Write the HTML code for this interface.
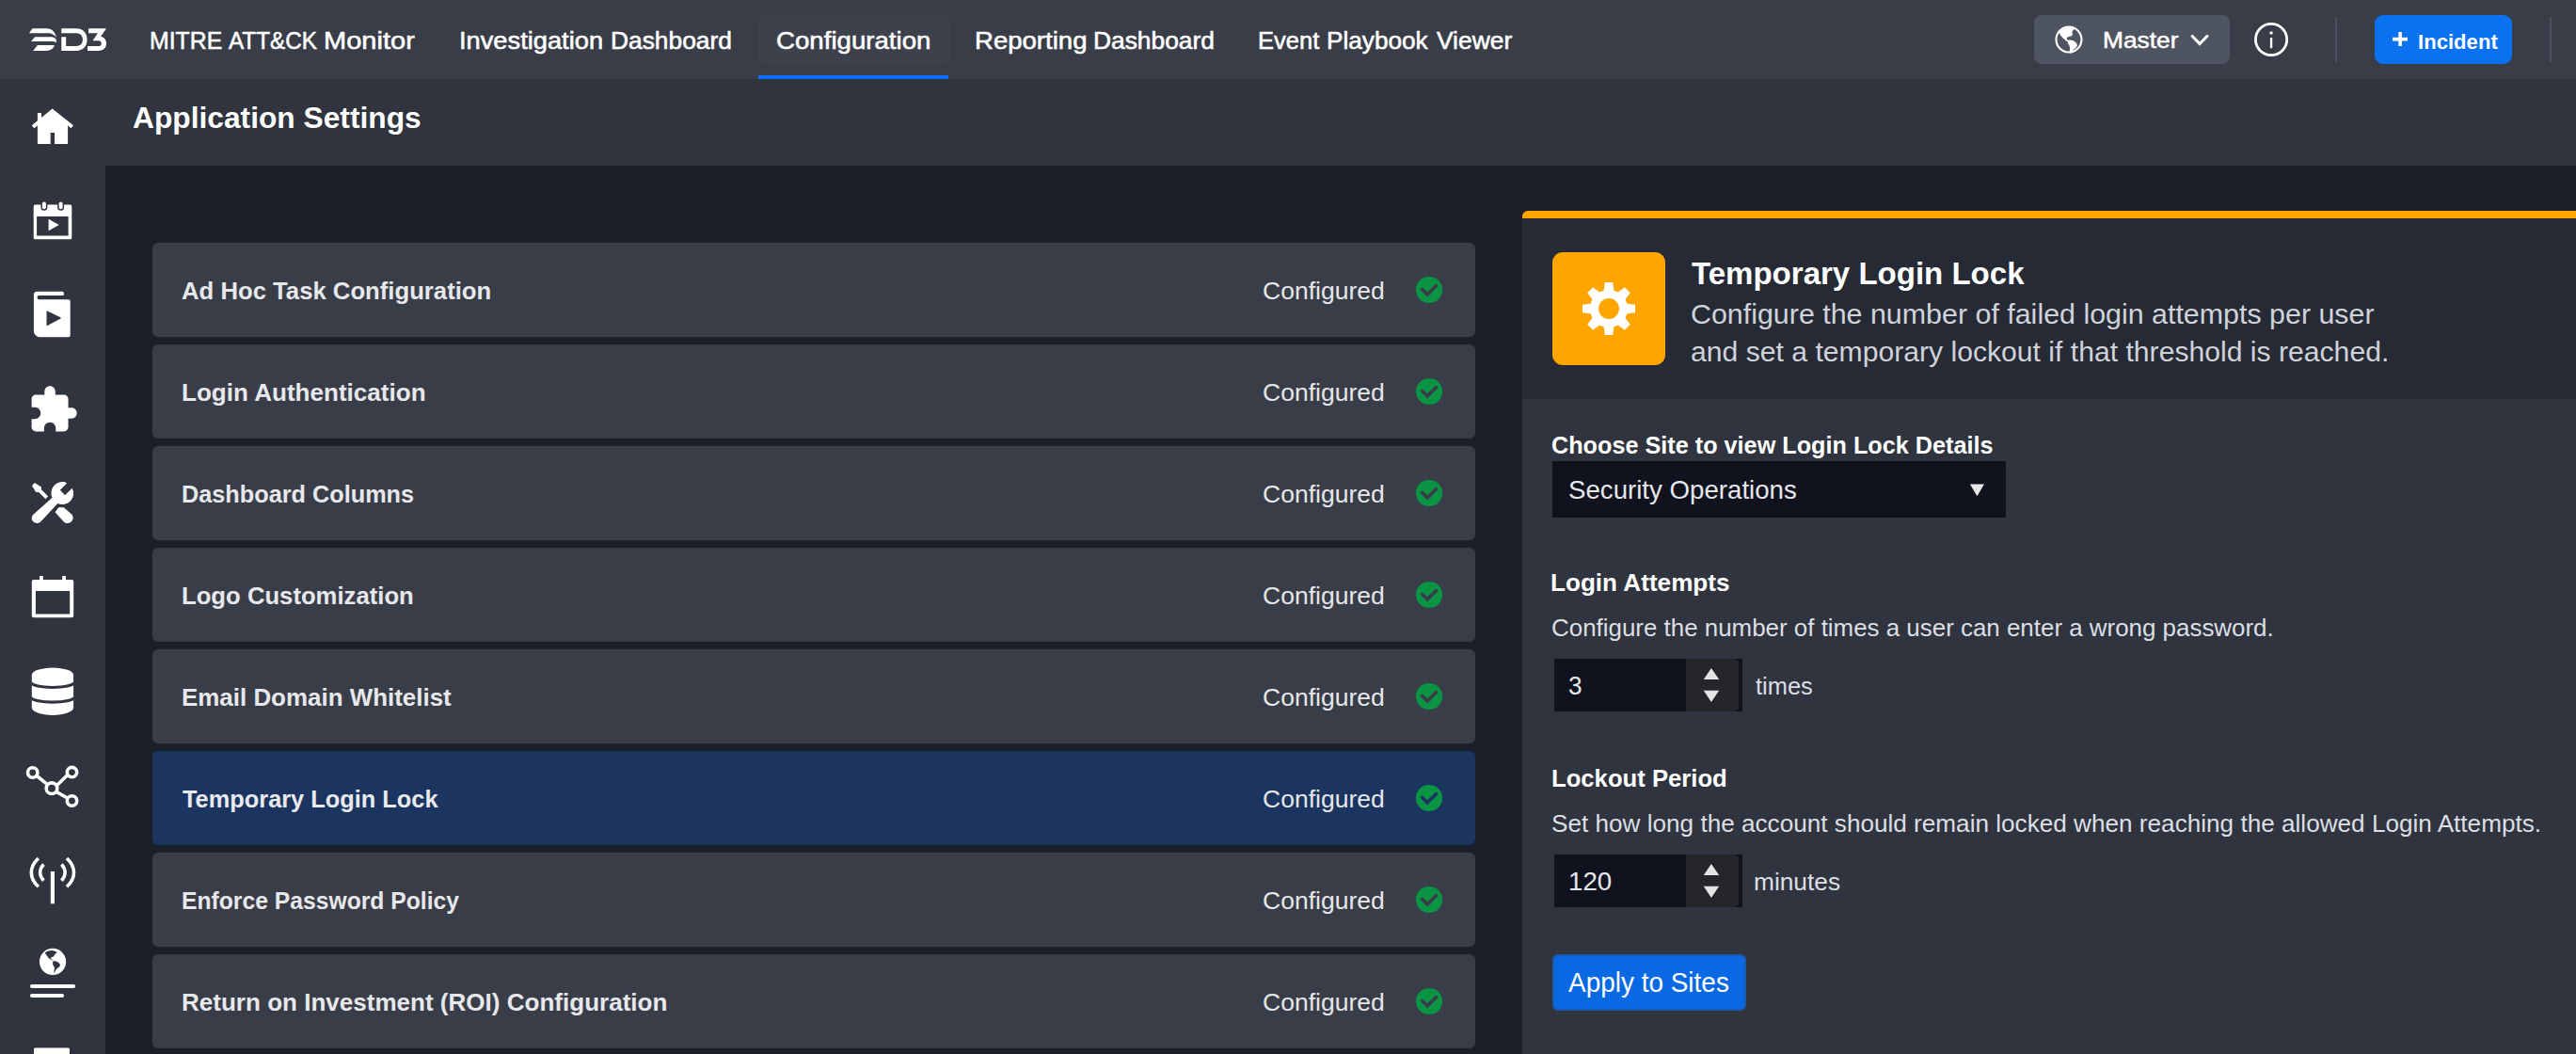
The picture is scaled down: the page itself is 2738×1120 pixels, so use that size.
<!DOCTYPE html><html><head><meta charset="utf-8"><title>Application Settings</title><style>
html,body{margin:0;padding:0;}
body{width:2738px;height:1120px;overflow:hidden;background:#1b1f2a;font-family:"Liberation Sans",sans-serif;position:relative;}
.a{position:absolute;}
.t{position:absolute;line-height:1;white-space:nowrap;transform-origin:0 0;}
svg{position:absolute;overflow:visible;}
.row{position:absolute;left:162px;width:1406px;height:100px;background:#393d47;border-radius:6px;}
</style></head><body>
<div class="a" style="left:0;top:0;width:2738px;height:84px;background:#393d47"></div>
<div class="a" style="left:0;top:84px;width:2738px;height:92px;background:#2f343e"></div>
<div class="a" style="left:0;top:84px;width:112px;height:1036px;background:#2f343e"></div>
<div class="a" style="left:806px;top:16px;width:204px;height:52px;background:#3d414c;border-radius:7px"></div>
<div class="a" style="left:806px;top:80px;width:202px;height:4px;background:#0d6efd"></div>
<div class="a" style="left:2162px;top:16px;width:208px;height:52px;background:#4f5461;border-radius:8px"></div>
<div class="a" style="left:2482px;top:18px;width:2px;height:48px;background:#4c505c"></div>
<div class="a" style="left:2710px;top:18px;width:2px;height:48px;background:#4c505c"></div>
<div class="a" style="left:2524px;top:16px;width:146px;height:52px;background:#0a71f0;border-radius:9px"></div>
<div class="row" style="top:258px;background:#393d47"></div>
<div class="row" style="top:366px;background:#393d47"></div>
<div class="row" style="top:474px;background:#393d47"></div>
<div class="row" style="top:582px;background:#393d47"></div>
<div class="row" style="top:690px;background:#393d47"></div>
<div class="row" style="top:798px;background:#1b3560"></div>
<div class="row" style="top:906px;background:#393d47"></div>
<div class="row" style="top:1014px;background:#393d47"></div>
<div class="a" style="left:1618px;top:224px;width:1120px;height:896px;background:#2f343e;border-radius:6px 0 0 0;overflow:hidden"><div class="a" style="left:0;top:0;width:1120px;height:200px;background:#262a35"></div><div class="a" style="left:0;top:0;width:1120px;height:8px;background:#ffa500"></div></div>
<div class="a" style="left:1650px;top:268px;width:120px;height:120px;background:#ffa500;border-radius:11px"></div>
<div class="a" style="left:1650px;top:490px;width:482px;height:60px;background:#10131e"></div>
<div class="a" style="left:1652px;top:700px;width:200px;height:56px;background:#10131e"></div>
<div class="a" style="left:1792px;top:700px;width:56px;height:56px;background:#25262c;border-radius:0 5px 5px 0"></div>
<div class="a" style="left:1652px;top:908px;width:200px;height:56px;background:#10131e"></div>
<div class="a" style="left:1792px;top:908px;width:56px;height:56px;background:#25262c;border-radius:0 5px 5px 0"></div>
<div class="a" style="left:1650px;top:1014px;width:206px;height:60px;box-sizing:border-box;background:#0969e2;border:2px solid #1d5bb0;border-radius:6px"></div>
<!-- logo -->
<svg style="left:20px;top:20px" width="110" height="45" viewBox="0 0 2576 1054" fill="#fff">
<path d="M340,240 L700,240 C830,240 900,330 935,465 C880,390 820,355 740,355 L255,355 Z"/>
<path d="M400,450 L790,450 C870,450 930,490 935,540 L925,592 C900,575 860,565 820,565 L305,565 Z"/>
<path d="M465,655 L890,655 C860,740 790,795 680,795 L355,795 Z"/>
<path d="M1060,240 L1420,240 C1600,240 1700,350 1700,517 C1700,690 1600,795 1420,795 L1060,795 L1060,450 L1175,450 L1175,680 L1420,680 C1530,680 1590,620 1590,517 C1590,415 1530,355 1420,355 L1060,355 Z"/>
<path d="M1735,240 L2170,240 L2170,250 L2040,440 C2130,460 2180,530 2180,615 C2180,720 2100,795 1980,795 L1710,795 L1710,680 L1980,680 C2030,680 2055,650 2055,612 C2055,575 2030,545 1985,545 L1840,545 L1965,355 L1735,355 Z"/>
</svg>
<!-- home -->
<svg style="left:0;top:0" width="112" height="1120" viewBox="0 0 112 1120" fill="#fff">
<path d="M55.6,115.6 L78,133.2 L75.6,136.2 L72.1,133.5 L72.1,153 L58,153 L58,141 L53.7,141 L53.7,153 L39.9,153 L39.9,133.5 L36.2,136.2 L33.8,133.2 L39.9,128.3 L39.9,120 L44,120 L44,125 Z"/>
<!-- calendar play -->
<path fill-rule="evenodd" d="M37.2,217.6 H74.8 a1.5,1.5 0 0 1 1.5,1.5 V252.7 a1.5,1.5 0 0 1 -1.5,1.5 H37.2 a1.5,1.5 0 0 1 -1.5,-1.5 V219.1 a1.5,1.5 0 0 1 1.5,-1.5 Z M39.1,230.1 V250.6 H72.6 V230.1 Z"/>
<rect x="43.4" y="213" width="7" height="10.8" rx="3.5" fill="#2f343e"/><rect x="61.1" y="213" width="7" height="10.8" rx="3.5" fill="#2f343e"/>
<rect x="44.9" y="214.4" width="4" height="7.8" rx="2"/><rect x="62.6" y="214.4" width="4" height="7.8" rx="2"/>
<path d="M51.6,232.8 L62.7,239 L51.6,245.3 Z"/>
<!-- book play -->
<path d="M39.4,309.7 H65.9 a2.2,2.2 0 0 1 0,4.4 H41.6 a2.05,2.05 0 0 0 0,4.1 H72.7 a2,2 0 0 1 2,2 V356.2 a2,2 0 0 1 -2,2 H42.4 a6.5,6.5 0 0 1 -6.5,-6.5 V313.2 a3.5,3.5 0 0 1 3.5,-3.5 Z"/>
<path d="M50.1,331 L64.1,337.9 L50.1,345.5 Z" fill="#2f343e" stroke="#2f343e" stroke-width="1.2" stroke-linejoin="round"/>
<!-- calendar -->
<path fill-rule="evenodd" d="M35.8,616 H76.2 a2,2 0 0 1 2,2 V654.3 a2,2 0 0 1 -2,2 H35.8 a2,2 0 0 1 -2,-2 V618 a2,2 0 0 1 2,-2 Z M37.9,627.9 V652.4 H74.2 V627.9 Z"/>
<rect x="42" y="612" width="3.8" height="6" /><rect x="66.2" y="612" width="3.8" height="6"/>
<!-- database -->
<path d="M33.8,717 A22.15,7.4 0 0 1 78.1,717 V752.1 A22.15,7.8 0 0 1 33.8,752.1 Z"/>
<path fill="#2f343e" d="M33.3,723.3 A22.65,5.6 0 0 0 78.6,723.3 V727.3 A22.65,4.7 0 0 1 33.3,727.3 Z M33.3,739.3 A22.65,5.3 0 0 0 78.6,739.3 V743 A22.65,4.7 0 0 1 33.3,743 Z"/>
<!-- network -->
<g fill="none" stroke="#fff" stroke-width="3.6">
<circle cx="34.7" cy="821" r="5.2"/><circle cx="76.5" cy="820.6" r="5.2"/><circle cx="76.5" cy="851" r="5.2"/><circle cx="55" cy="837.7" r="5.8"/>
<path d="M39.8,825 L49.5,832.8 M61,834 L71.5,823.8 M60.3,841.6 L71.6,848"/>
</g>
<!-- antenna -->
<g fill="none" stroke="#fff">
<path d="M55.9,926 V960.3" stroke-width="4.2"/>
<path d="M46.4,918.5 C41.5,924 41.5,930.5 46.4,935.8 M65.4,918.5 C70.3,924 70.3,930.5 65.4,935.8" stroke-width="3.6"/>
<path d="M40.8,912 C30.8,921.5 30.8,933 40.8,942.3 M71,912 C81,921.5 81,933 71,942.3" stroke-width="3.6"/>
</g>
<!-- bottom partial -->
<rect x="36" y="1113.6" width="38" height="8" rx="1.5"/>
</svg>
<!-- puzzle (material extension) -->
<svg style="left:29.3px;top:407.5px" width="55" height="55" viewBox="0 0 24 24" fill="#fff"><path d="M20.5 11H19V7c0-1.1-.9-2-2-2h-4V3.5C13 2.12 11.88 1 10.5 1S8 2.12 8 3.5V5H4c-1.1 0-1.99.9-1.99 2v3.8H3.5c1.49 0 2.7 1.21 2.7 2.7s-1.21 2.7-2.7 2.7H2V20c0 1.1.9 2 2 2h3.8v-1.5c0-1.49 1.21-2.7 2.7-2.7 1.49 0 2.7 1.21 2.7 2.7V22H17c1.1 0 2-.9 2-2v-4h1.5c1.38 0 2.5-1.12 2.5-2.5S21.88 11 20.5 11z"/></svg>
<!-- tools -->
<svg style="left:26px;top:504px" width="64" height="60" viewBox="0 0 1124 1054" fill="#fff">
<path d="M790,165 L665,295 L755,390 L890,260 C905,290 915,320 915,350 C915,465 825,560 710,560 C680,560 650,555 620,545 L310,880 C270,925 200,925 160,880 C125,840 130,780 170,745 L520,435 C505,410 500,380 500,350 C500,235 595,140 710,140 C740,140 765,148 790,165 Z"/>
<path d="M140,215 L190,160 L315,235 L315,285 L440,410 L395,460 L265,332 L215,332 Z"/>
<path d="M640,615 L735,620 L880,745 C915,780 915,840 880,880 C840,920 775,925 735,885 L572,705 Z"/>
</svg>
<!-- globe + lines (sidebar) -->
<svg style="left:26px;top:1000px" width="64" height="66" viewBox="0 0 1022 1054">
<circle cx="480" cy="350" r="225" fill="#fff"/>
<path fill="#2f343e" d="M350,200 C380,170 440,158 480,162 C520,165 548,180 556,205 C535,205 520,215 512,235 C505,255 490,268 465,272 C452,275 442,285 448,298 C458,312 480,322 497,335 C475,332 450,318 425,298 C395,272 365,235 350,200 Z"/>
<path fill="#2f343e" d="M490,340 C520,335 550,345 575,362 C595,375 607,392 604,410 C600,432 582,448 560,460 C540,475 528,500 515,525 C510,535 502,540 498,535 C505,505 512,470 508,445 C495,430 482,410 480,385 C478,365 482,350 490,340 Z"/>
<rect x="95" y="733" width="770" height="67" rx="33" fill="#fff"/>
<rect x="95" y="893" width="577" height="67" rx="33" fill="#fff"/>
</svg>
<!-- master globe -->
<svg style="left:2150px;top:10px" width="300" height="66" viewBox="0 0 2576 567">
<circle cx="420" cy="275" r="116" fill="none" stroke="#fff" stroke-width="18"/>
<path fill="#fff" d="M332,215 C352,182 395,160 440,160 C455,160 468,163 478,168 C470,180 462,190 452,200 C445,208 450,218 456,228 C450,240 436,248 420,250 C405,252 398,262 404,274 C410,282 418,286 426,290 L410,296 C380,280 350,250 332,215 Z"/>
<path fill="#fff" d="M414,282 C435,274 462,282 480,298 C494,310 500,324 494,338 C488,352 472,358 462,368 C452,380 448,396 440,408 L426,384 C432,362 432,342 422,326 C410,312 404,296 414,282 Z"/>
<path d="M1540,236 L1615,314 L1690,236" fill="none" stroke="#fff" stroke-width="26"/>
<circle cx="2268" cy="275" r="143" fill="none" stroke="#fff" stroke-width="24"/>
<circle cx="2268" cy="215" r="15" fill="#fff"/><rect x="2258" y="258" width="20" height="95" fill="#fff"/>
</svg>
<!-- plus -->
<svg style="left:2542.9px;top:34.1px" width="16" height="15" viewBox="0 0 16 15"><path d="M8.1,0 V15 M0,7.6 H16" stroke="#fff" stroke-width="3.6" fill="none"/></svg>
<!-- gear -->
<svg style="left:1680px;top:298px" width="60" height="60" viewBox="-30 -30 60 60" fill="#fff">
<circle r="20"/>
<path transform="rotate(0)" d="M-5.6,-18 L-4.2,-28 H4.2 L5.6,-18 Z"/><path transform="rotate(45)" d="M-5.6,-18 L-4.2,-28 H4.2 L5.6,-18 Z"/><path transform="rotate(90)" d="M-5.6,-18 L-4.2,-28 H4.2 L5.6,-18 Z"/><path transform="rotate(135)" d="M-5.6,-18 L-4.2,-28 H4.2 L5.6,-18 Z"/><path transform="rotate(180)" d="M-5.6,-18 L-4.2,-28 H4.2 L5.6,-18 Z"/><path transform="rotate(225)" d="M-5.6,-18 L-4.2,-28 H4.2 L5.6,-18 Z"/><path transform="rotate(270)" d="M-5.6,-18 L-4.2,-28 H4.2 L5.6,-18 Z"/><path transform="rotate(315)" d="M-5.6,-18 L-4.2,-28 H4.2 L5.6,-18 Z"/>
<circle r="10.9" fill="#ffa500"/>
</svg>
<!-- select arrow -->
<svg style="left:2093px;top:513.6px" width="17" height="14" viewBox="0 0 17 14"><path d="M0.9,0.5 H16 L8.45,13.3 Z" fill="#e6e6e6"/></svg>
<!-- spinners -->
<svg style="left:1810px;top:709px" width="18" height="38" viewBox="0 0 18 38" fill="#e4e4e4"><path d="M8.9,0.9 L17.2,13 H0.8 Z M0.8,24.7 H17.2 L8.9,36.9 Z"/></svg>
<svg style="left:1810px;top:917px" width="18" height="38" viewBox="0 0 18 38" fill="#e4e4e4"><path d="M8.9,0.9 L17.2,13 H0.8 Z M0.8,24.7 H17.2 L8.9,36.9 Z"/></svg>

<svg style="left:1502px;top:291px" width="34" height="34" viewBox="-17 -17 34 34"><circle r="14.1" fill="#0a9444"/><path fill="#393d47" d="M-7.35,-2.8 L-9.8,-0.4 L-2,7.6 L9.8,-4 L7.4,-6.7 L-2,2.2 Z"/></svg>
<svg style="left:1502px;top:399px" width="34" height="34" viewBox="-17 -17 34 34"><circle r="14.1" fill="#0a9444"/><path fill="#393d47" d="M-7.35,-2.8 L-9.8,-0.4 L-2,7.6 L9.8,-4 L7.4,-6.7 L-2,2.2 Z"/></svg>
<svg style="left:1502px;top:507px" width="34" height="34" viewBox="-17 -17 34 34"><circle r="14.1" fill="#0a9444"/><path fill="#393d47" d="M-7.35,-2.8 L-9.8,-0.4 L-2,7.6 L9.8,-4 L7.4,-6.7 L-2,2.2 Z"/></svg>
<svg style="left:1502px;top:615px" width="34" height="34" viewBox="-17 -17 34 34"><circle r="14.1" fill="#0a9444"/><path fill="#393d47" d="M-7.35,-2.8 L-9.8,-0.4 L-2,7.6 L9.8,-4 L7.4,-6.7 L-2,2.2 Z"/></svg>
<svg style="left:1502px;top:723px" width="34" height="34" viewBox="-17 -17 34 34"><circle r="14.1" fill="#0a9444"/><path fill="#393d47" d="M-7.35,-2.8 L-9.8,-0.4 L-2,7.6 L9.8,-4 L7.4,-6.7 L-2,2.2 Z"/></svg>
<svg style="left:1502px;top:831px" width="34" height="34" viewBox="-17 -17 34 34"><circle r="14.1" fill="#0a9444"/><path fill="#1b3560" d="M-7.35,-2.8 L-9.8,-0.4 L-2,7.6 L9.8,-4 L7.4,-6.7 L-2,2.2 Z"/></svg>
<svg style="left:1502px;top:939px" width="34" height="34" viewBox="-17 -17 34 34"><circle r="14.1" fill="#0a9444"/><path fill="#393d47" d="M-7.35,-2.8 L-9.8,-0.4 L-2,7.6 L9.8,-4 L7.4,-6.7 L-2,2.2 Z"/></svg>
<svg style="left:1502px;top:1047px" width="34" height="34" viewBox="-17 -17 34 34"><circle r="14.1" fill="#0a9444"/><path fill="#393d47" d="M-7.35,-2.8 L-9.8,-0.4 L-2,7.6 L9.8,-4 L7.4,-6.7 L-2,2.2 Z"/></svg>
<span class="t" style="left:158.7px;top:31px;font-size:25.4px;transform:scaleX(0.9776);color:#fff;-webkit-text-stroke:0.55px #fff;">MITRE</span>
<span class="t" style="left:243.2px;top:31px;font-size:25.4px;transform:scaleX(0.9551);color:#fff;-webkit-text-stroke:0.55px #fff;">ATT&amp;CK</span>
<span class="t" style="left:344.0px;top:31px;font-size:25.4px;transform:scaleX(1.1434);color:#fff;-webkit-text-stroke:0.55px #fff;">Monitor</span>
<span class="t" style="left:488.3px;top:31px;font-size:25.4px;transform:scaleX(1.0736);color:#fff;-webkit-text-stroke:0.55px #fff;">Investigation</span>
<span class="t" style="left:648.5px;top:31px;font-size:25.4px;transform:scaleX(1.0372);color:#fff;-webkit-text-stroke:0.55px #fff;">Dashboard</span>
<span class="t" style="left:825.1px;top:31px;font-size:25.4px;transform:scaleX(1.0886);color:#fff;-webkit-text-stroke:0.55px #fff;">Configuration</span>
<span class="t" style="left:1035.9px;top:31px;font-size:25.4px;transform:scaleX(1.0850);color:#fff;-webkit-text-stroke:0.55px #fff;">Reporting</span>
<span class="t" style="left:1162.0px;top:31px;font-size:25.4px;transform:scaleX(1.0372);color:#fff;-webkit-text-stroke:0.55px #fff;">Dashboard</span>
<span class="t" style="left:1337.3px;top:31px;font-size:25.4px;transform:scaleX(1.0048);color:#fff;-webkit-text-stroke:0.55px #fff;">Event</span>
<span class="t" style="left:1409.9px;top:31px;font-size:25.4px;transform:scaleX(1.0301);color:#fff;-webkit-text-stroke:0.55px #fff;">Playbook</span>
<span class="t" style="left:1526.8px;top:31px;font-size:25.4px;transform:scaleX(1.0390);color:#fff;-webkit-text-stroke:0.55px #fff;">Viewer</span>
<span class="t" style="left:2235.4px;top:31px;font-size:24.1px;transform:scaleX(1.0932);color:#fff;-webkit-text-stroke:0.5px #fff;">Master</span>
<span class="t" style="left:2570.4px;top:34px;font-size:22.2px;transform:scaleX(0.9964);color:#fff;font-weight:700;">Incident</span>
<span class="t" style="left:140.8px;top:111px;font-size:30.9px;transform:scaleX(1.0269);color:#fff;font-weight:700;">Application Settings</span>
<span class="t" style="left:193.2px;top:296px;font-size:26.4px;transform:scaleX(0.9735);color:#e7e8eb;font-weight:700;">Ad Hoc Task Configuration</span>
<span class="t" style="left:1342.0px;top:296px;font-size:26.1px;transform:scaleX(1.0160);color:#e6e7ea;">Configured</span>
<span class="t" style="left:193.3px;top:404px;font-size:26.4px;transform:scaleX(0.9875);color:#e7e8eb;font-weight:700;">Login Authentication</span>
<span class="t" style="left:1342.0px;top:404px;font-size:26.1px;transform:scaleX(1.0160);color:#e6e7ea;">Configured</span>
<span class="t" style="left:193.4px;top:512px;font-size:26.4px;transform:scaleX(0.9575);color:#e7e8eb;font-weight:700;">Dashboard Columns</span>
<span class="t" style="left:1342.0px;top:512px;font-size:26.1px;transform:scaleX(1.0160);color:#e6e7ea;">Configured</span>
<span class="t" style="left:193.4px;top:620px;font-size:26.4px;transform:scaleX(0.9730);color:#e7e8eb;font-weight:700;">Logo Customization</span>
<span class="t" style="left:1342.0px;top:620px;font-size:26.1px;transform:scaleX(1.0160);color:#e6e7ea;">Configured</span>
<span class="t" style="left:193.3px;top:728px;font-size:26.4px;transform:scaleX(0.9826);color:#e7e8eb;font-weight:700;">Email Domain Whitelist</span>
<span class="t" style="left:1342.0px;top:728px;font-size:26.1px;transform:scaleX(1.0160);color:#e6e7ea;">Configured</span>
<span class="t" style="left:193.9px;top:836px;font-size:26.4px;transform:scaleX(0.9612);color:#e9eaed;font-weight:700;">Temporary Login Lock</span>
<span class="t" style="left:1342.0px;top:836px;font-size:26.1px;transform:scaleX(1.0160);color:#e6e7ea;">Configured</span>
<span class="t" style="left:193.4px;top:944px;font-size:26.4px;transform:scaleX(0.9356);color:#e7e8eb;font-weight:700;">Enforce Password Policy</span>
<span class="t" style="left:1342.0px;top:944px;font-size:26.1px;transform:scaleX(1.0160);color:#e6e7ea;">Configured</span>
<span class="t" style="left:193.3px;top:1052px;font-size:26.4px;transform:scaleX(0.9866);color:#e7e8eb;font-weight:700;">Return on Investment (ROI) Configuration</span>
<span class="t" style="left:1342.0px;top:1052px;font-size:26.1px;transform:scaleX(1.0160);color:#e6e7ea;">Configured</span>
<span class="t" style="left:1798.1px;top:274px;font-size:33.8px;transform:scaleX(0.9771);color:#fff;font-weight:700;">Temporary Login Lock</span>
<span class="t" style="left:1797.1px;top:319px;font-size:29.6px;transform:scaleX(1.0272);color:#d0d3d9;">Configure the number of failed login attempts per user</span>
<span class="t" style="left:1797.1px;top:359px;font-size:29.6px;transform:scaleX(1.0186);color:#d0d3d9;">and set a temporary lockout if that threshold is reached.</span>
<span class="t" style="left:1649.1px;top:461px;font-size:25.7px;transform:scaleX(0.9819);color:#fff;font-weight:700;">Choose Site to view Login Lock Details</span>
<span class="t" style="left:1667.1px;top:507px;font-size:27.8px;transform:scaleX(0.9946);color:#e6e8ec;">Security Operations</span>
<span class="t" style="left:1648.4px;top:607px;font-size:25.4px;transform:scaleX(1.0286);color:#fff;font-weight:700;">Login Attempts</span>
<span class="t" style="left:1648.9px;top:655px;font-size:25.8px;transform:scaleX(1.0045);color:#dcdfe4;">Configure the number of times a user can enter a wrong password.</span>
<span class="t" style="left:1667.0px;top:715px;font-size:27.5px;transform:scaleX(0.9538);color:#e6e8ec;">3</span>
<span class="t" style="left:1865.5px;top:717px;font-size:25.8px;transform:scaleX(0.9869);color:#dcdfe4;">times</span>
<span class="t" style="left:1648.5px;top:815px;font-size:25.4px;transform:scaleX(1.0105);color:#fff;font-weight:700;">Lockout Period</span>
<span class="t" style="left:1648.9px;top:863px;font-size:25.8px;transform:scaleX(1.0133);color:#dcdfe4;">Set how long the account should remain locked when reaching the allowed Login Attempts.</span>
<span class="t" style="left:1666.5px;top:923px;font-size:27.5px;transform:scaleX(1.0070);color:#e6e8ec;">120</span>
<span class="t" style="left:1863.5px;top:925px;font-size:25.8px;transform:scaleX(1.0193);color:#dcdfe4;">minutes</span>
<span class="t" style="left:1666.9px;top:1030px;font-size:29.0px;transform:scaleX(0.9636);color:#fff;">Apply to Sites</span>
</body></html>
